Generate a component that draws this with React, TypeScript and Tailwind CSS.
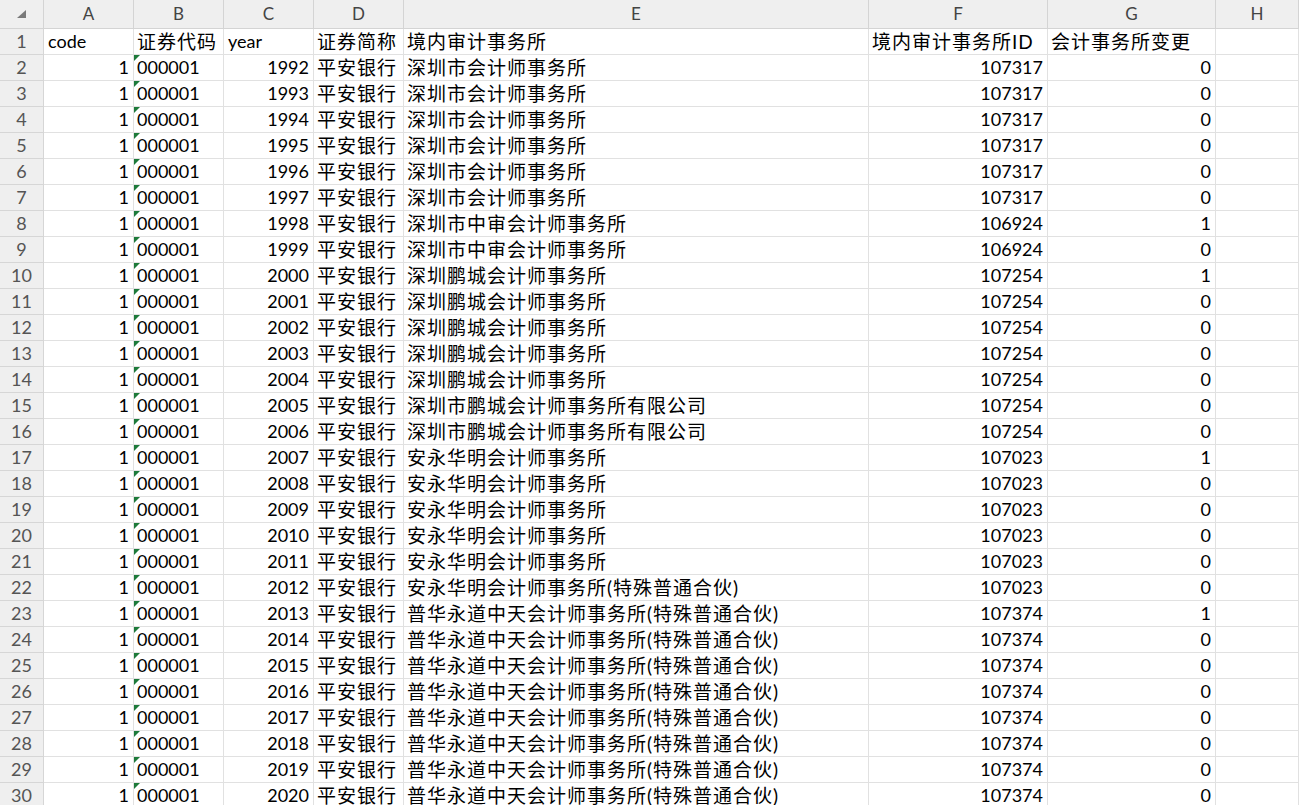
const cols = ['A', 'B', 'C', 'D', 'E', 'F', 'G', 'H']

type Row = { year: number; firm: string; id: number; change: number }

const firms: [string, number, number[]][] = [
  ['深圳市会计师事务所', 107317, [1992, 1993, 1994, 1995, 1996, 1997]],
  ['深圳市中审会计师事务所', 106924, [1998, 1999]],
  ['深圳鹏城会计师事务所', 107254, [2000, 2001, 2002, 2003, 2004]],
  ['深圳市鹏城会计师事务所有限公司', 107254, [2005, 2006]],
  ['安永华明会计师事务所', 107023, [2007, 2008, 2009, 2010, 2011]],
  ['安永华明会计师事务所(特殊普通合伙)', 107023, [2012]],
  ['普华永道中天会计师事务所(特殊普通合伙)', 107374, [2013, 2014, 2015, 2016, 2017, 2018, 2019, 2020]],
]

const changed = [1998, 2000, 2007, 2013]

const rows: Row[] = firms.flatMap(([firm, id, years]) =>
  years.map((year) => ({ year, firm, id, change: changed.includes(year) ? 1 : 0 }))
)

const grid = 'grid grid-cols-[44px_90px_90px_90px_90px_465px_179px_168px_1fr]'
const cell = 'h-[26px] border-r border-b border-[#e1e1e1] overflow-hidden whitespace-nowrap leading-[25px] text-[18px] text-black'
const cjk = 'text-[19px] tracking-[1px] pl-[3px]'
const num = 'text-right pr-[4px]'

function RowHead({ n }: { n: number }) {
  return (
    <div className="h-[26px] border-r border-b border-[#d6d6d6] bg-[#efefef] text-center leading-[25px] text-[18px] text-[#555]">
      {n}
    </div>
  )
}

function TextNum({ children }: { children: string }) {
  // number stored as text: green marker in the corner
  return (
    <div className={`${cell} relative pl-[3px]`}>
      <span className="absolute left-0 top-0 h-0 w-0 border-t-[6px] border-r-[6px] border-t-[#1d7a3a] border-r-transparent" />
      {children}
    </div>
  )
}

export default function App() {
  return (
    <div className="h-[805px] w-[1299px] overflow-hidden bg-white font-['Lato','Noto_Sans_CJK_SC',sans-serif]">
      {/* column letters */}
      <div className={grid}>
        <div className="relative h-[29px] border-r border-b border-[#d4d4d4] bg-[#efefef]">
          <span className="absolute left-[17px] top-[10px] h-0 w-0 border-b-[8px] border-l-[9px] border-b-[#7a7a7a] border-l-transparent" />
        </div>
        {cols.map((c) => (
          <div
            key={c}
            className="h-[29px] border-r border-b border-[#d4d4d4] bg-[#efefef] text-center leading-[28px] text-[17px] text-[#444]"
          >
            {c}
          </div>
        ))}
      </div>

      {/* header row */}
      <div className={grid}>
        <RowHead n={1} />
        <div className={`${cell} pl-[4px]`}>code</div>
        <div className={`${cell} ${cjk}`}>证券代码</div>
        <div className={`${cell} pl-[4px]`}>year</div>
        <div className={`${cell} ${cjk}`}>证券简称</div>
        <div className={`${cell} ${cjk}`}>境内审计事务所</div>
        <div className={`${cell} ${cjk}`}>境内审计事务所ID</div>
        <div className={`${cell} ${cjk}`}>会计事务所变更</div>
        <div className={cell} />
      </div>

      {rows.map((r, i) => (
        <div key={r.year} className={grid}>
          <RowHead n={i + 2} />
          <div className={`${cell} ${num}`}>1</div>
          <TextNum>000001</TextNum>
          <div className={`${cell} ${num}`}>{r.year}</div>
          <div className={`${cell} ${cjk}`}>平安银行</div>
          <div className={`${cell} ${cjk}`}>{r.firm}</div>
          <div className={`${cell} ${num}`}>{r.id}</div>
          <div className={`${cell} ${num}`}>{r.change}</div>
          <div className={cell} />
        </div>
      ))}
    </div>
  )
}
